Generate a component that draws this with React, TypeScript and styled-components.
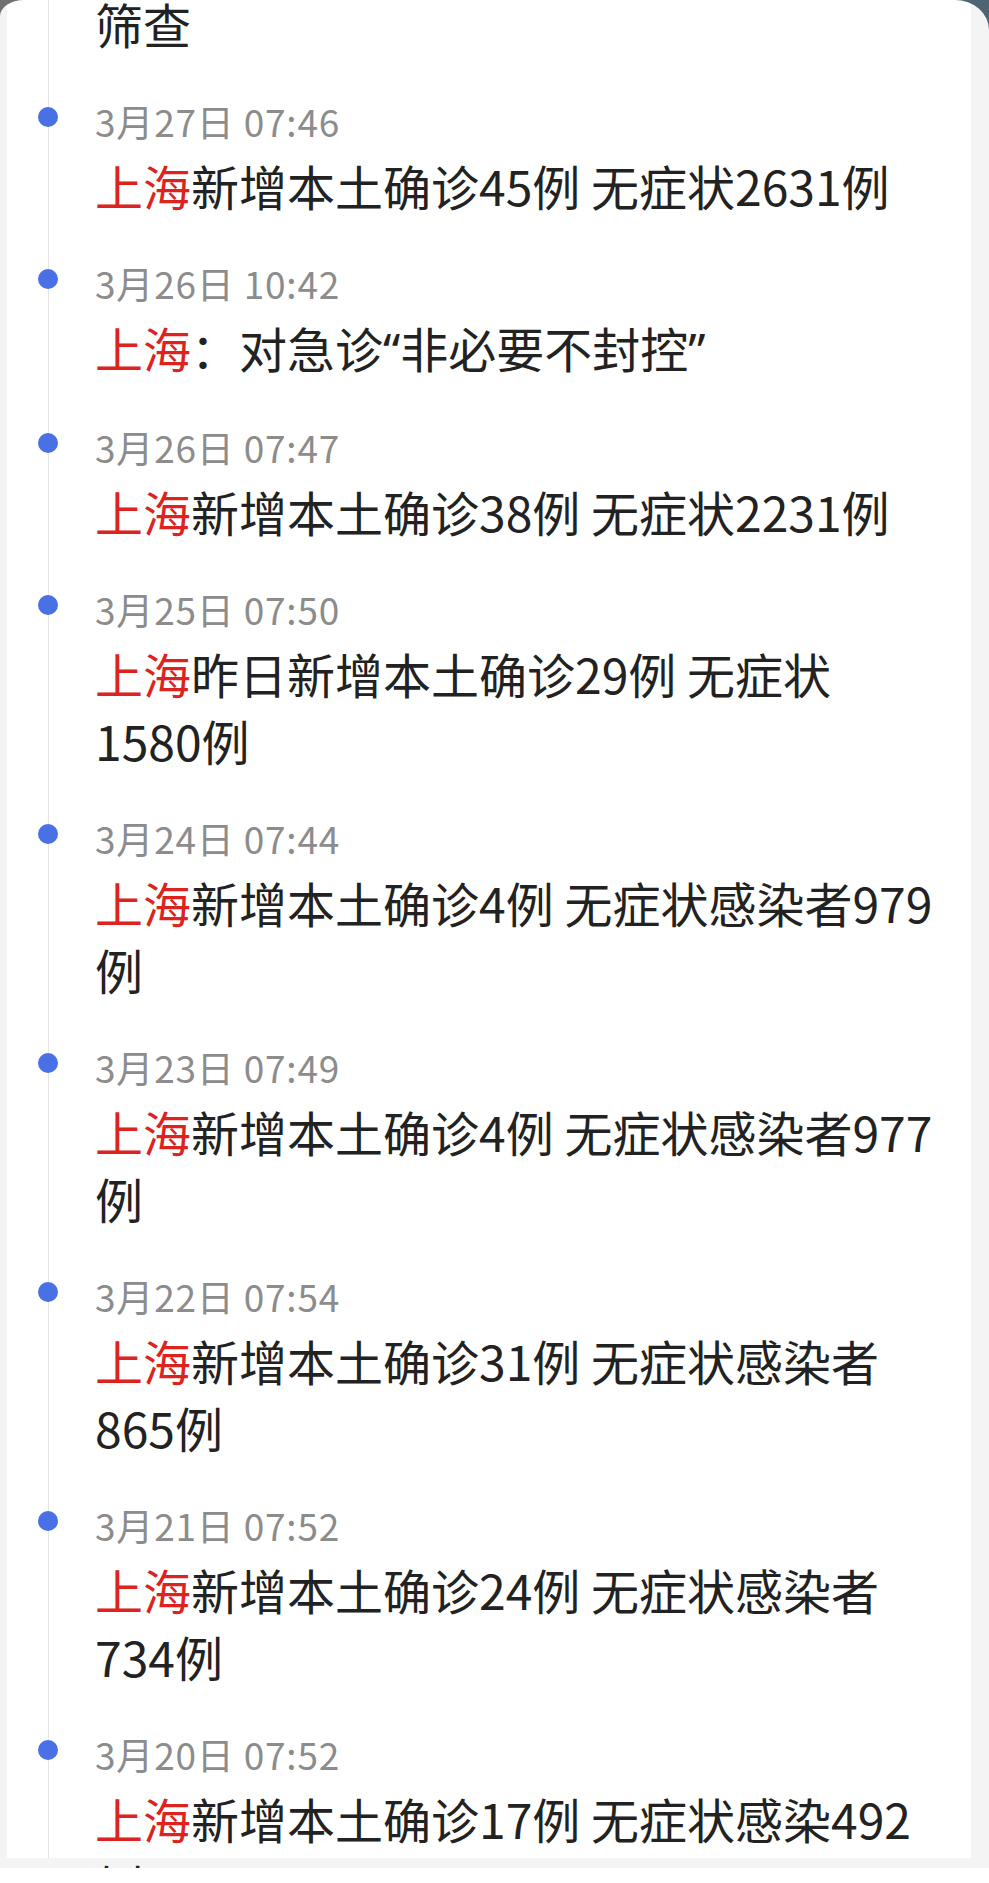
import React from "react";
import styled, { createGlobalStyle } from "styled-components";

const GlobalStyle = createGlobalStyle`
  body {
    margin: 0;
    background: #ffffff;
  }
`;

const Screen = styled.div`
  position: relative;
  height: 1868px;
  overflow: hidden;
  background: #f4f4f4;
  padding: 0 18px 0 7px;
  box-sizing: border-box;
  font-family: "Noto Sans CJK SC", "Noto Sans", sans-serif;
`;

const Card = styled.div`
  position: relative;
  height: 100%;
  background: #ffffff;
  padding-left: 88px;
  box-sizing: border-box;

  &::before {
    content: "";
    position: absolute;
    left: 41px;
    top: 0;
    bottom: 0;
    width: 1px;
    background: #e6e6e6;
  }
`;

const Feed = styled.div`
  display: flex;
  flex-direction: column;
  gap: 42px;
  margin-top: -10px;
  width: 842px;
`;

const Entry = styled.div`
  position: relative;
  display: flex;
  flex-direction: column;
`;

const Dot = styled.span`
  position: absolute;
  left: -57px;
  top: 8px;
  width: 20px;
  height: 20px;
  border-radius: 50%;
  background: #4a70e6;
`;

const Time = styled.div`
  font-size: 37px;
  line-height: 44px;
  letter-spacing: 0.8px;
  color: #8c8c8c;
`;

const Headline = styled.div<{ $noTime?: boolean }>`
  margin-top: ${(p) => (p.$noTime ? "0" : "9px")};
  font-size: 48px;
  line-height: 67px;
  color: #222222;
`;

const Place = styled.span`
  color: #dd2320;
`;

const Quote = styled.span`
  font-family: "Noto Sans", sans-serif;
`;

const Corner = styled.svg<{ $side: "left" | "right" }>`
  position: absolute;
  top: 0;
  ${(p) => (p.$side === "left" ? "left: 0;" : "right: 0;")}
`;

type Item = { time: string; place: string; rest: React.ReactNode };

const items: Item[] = [
  { time: "3月27日 07:46", place: "上海", rest: "新增本土确诊45例 无症状2631例" },
  {
    time: "3月26日 10:42",
    place: "上海",
    rest: (
      <>
        ：对急诊<Quote>“</Quote>非必要不封控<Quote>”</Quote>
      </>
    ),
  },
  { time: "3月26日 07:47", place: "上海", rest: "新增本土确诊38例 无症状2231例" },
  { time: "3月25日 07:50", place: "上海", rest: "昨日新增本土确诊29例 无症状1580例" },
  { time: "3月24日 07:44", place: "上海", rest: "新增本土确诊4例 无症状感染者979例" },
  { time: "3月23日 07:49", place: "上海", rest: "新增本土确诊4例 无症状感染者977例" },
  { time: "3月22日 07:54", place: "上海", rest: "新增本土确诊31例 无症状感染者865例" },
  { time: "3月21日 07:52", place: "上海", rest: "新增本土确诊24例 无症状感染者734例" },
  { time: "3月20日 07:52", place: "上海", rest: "新增本土确诊17例 无症状感染492例" },
];

export default function App() {
  return (
    <>
      <GlobalStyle />
      <Screen>
        <Card>
          <Feed>
            <Entry>
              <Headline $noTime>筛查</Headline>
            </Entry>
            {items.map((it) => (
              <Entry key={it.time}>
                <Dot />
                <Time>{it.time}</Time>
                <Headline>
                  <Place>{it.place}</Place>
                  {it.rest}
                </Headline>
              </Entry>
            ))}
          </Feed>
        </Card>
        <Corner $side="left" width="24" height="16" viewBox="0 0 24 16">
          <path d="M0 0 H24 A24 16 0 0 0 0 16 Z" fill="#707070" />
        </Corner>
        <Corner $side="right" width="34" height="30" viewBox="0 0 34 30">
          <path d="M0 0 H34 V30 A34 30 0 0 0 0 0 Z" fill="#4f6472" />
        </Corner>
      </Screen>
    </>
  );
}
